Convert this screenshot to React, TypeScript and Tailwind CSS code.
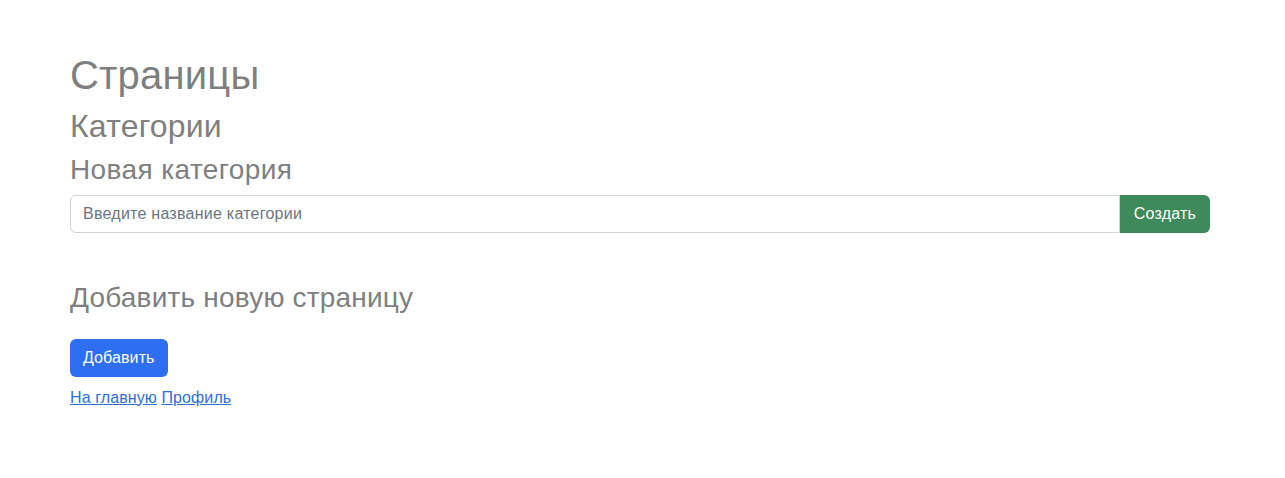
export default function App() {
  return (
    <div className="min-h-screen bg-white font-['Liberation_Sans',Arial,sans-serif] text-[#212529]">
      <div className="w-[1140px] ml-[70px] pt-[51px]">
        <h1 className="text-[40px] leading-[1.2] tracking-[0.2px] text-[#7f7f7f] mb-2">Страницы</h1>
        <h2 className="text-[32px] leading-[1.2] tracking-[0.2px] text-[#7f7f7f] mb-2">Категории</h2>
        <h3 className="text-[28px] leading-[1.2] tracking-[0.4px] text-[#7f7f7f] mb-2">Новая категория</h3>

        <div className="flex">
          <input
            type="text"
            placeholder="Введите название категории"
            className="flex-1 h-[38px] px-3 text-[16px] tracking-[0.25px] border border-[#ced4da] rounded-l-[6px] placeholder:text-[#6c757d] outline-none"
          />
          <button className="h-[38px] px-[14px] text-base tracking-[0.2px] text-white bg-[#3e8a5b] rounded-r-[6px]">
            Создать
          </button>
        </div>

        <h3 className="mt-[48px] text-[28px] leading-[1.2] tracking-[0.2px] text-[#7f7f7f] mb-2">
          Добавить новую страницу
        </h3>

        <button className="mt-[16px] h-[38px] px-[13px] text-base tracking-[0.1px] text-white bg-[#2e6ff2] rounded-[6px]">
          Добавить
        </button>

        <div className="mt-[9px] text-base tracking-[0.1px]">
          <a href="#" className="text-[#2f6fd8] underline">На главную</a>{" "}
          <a href="#" className="text-[#2f6fd8] underline">Профиль</a>
        </div>
      </div>
    </div>
  );
}
